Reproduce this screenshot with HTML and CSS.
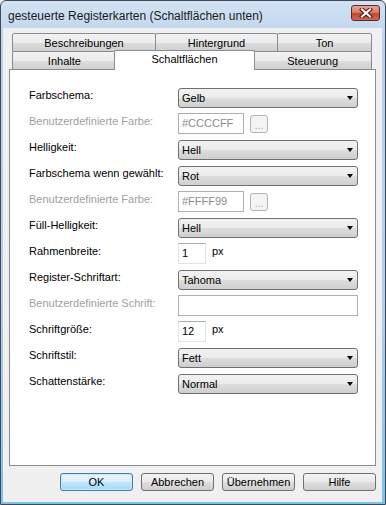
FILE: index.html
```html
<!DOCTYPE html>
<html lang="de">
<head>
    <meta charset="UTF-8">
    <meta name="viewport" content="width=device-width, initial-scale=1.0">
    <title>gesteuerte Registerkarten</title>
    <link rel="stylesheet" href="styles.css">
</head>
<body>
    <div class="window">
        <div class="titlebar">
            <span class="title">gesteuerte Registerkarten (Schaltflächen unten)</span>
            <div class="close">
                <svg width="14" height="10" viewBox="0 0 14 10">
                    <path d="M3 1.5 L11 8.5 M11 1.5 L3 8.5" stroke="#4a1a14" stroke-width="4.2" stroke-linecap="square"/>
                    <path d="M3 1.5 L11 8.5 M11 1.5 L3 8.5" stroke="#fff" stroke-width="2.2" stroke-linecap="square"/>
                </svg>
            </div>
        </div>
        <div class="client">
            <div class="tabs">
                <div class="tab_row">
                    <div class="tab t_beschreibungen">Beschreibungen</div>
                    <div class="tab t_hintergrund">Hintergrund</div>
                    <div class="tab t_ton">Ton</div>
                </div>
                <div class="tab_row">
                    <div class="tab t_inhalte">Inhalte</div>
                    <div class="tab t_schalt active">Schaltflächen</div>
                    <div class="tab t_steuerung">Steuerung</div>
                </div>
            </div>
            <div class="panel">
                <div class="row">
                    <span class="lbl">Farbschema:</span>
                    <div class="combo">Gelb<span class="arrow"></span></div>
                </div>
                <div class="row">
                    <span class="lbl disabled">Benutzerdefinierte Farbe:</span>
                    <div class="edit color disabled">#CCCCFF</div>
                    <div class="dots">...</div>
                </div>
                <div class="row">
                    <span class="lbl">Helligkeit:</span>
                    <div class="combo">Hell<span class="arrow"></span></div>
                </div>
                <div class="row">
                    <span class="lbl">Farbschema wenn gewählt:</span>
                    <div class="combo">Rot<span class="arrow"></span></div>
                </div>
                <div class="row">
                    <span class="lbl disabled">Benutzerdefinierte Farbe:</span>
                    <div class="edit color disabled">#FFFF99</div>
                    <div class="dots">...</div>
                </div>
                <div class="row">
                    <span class="lbl">Füll-Helligkeit:</span>
                    <div class="combo">Hell<span class="arrow"></span></div>
                </div>
                <div class="row">
                    <span class="lbl">Rahmenbreite:</span>
                    <div class="edit small">1</div>
                    <span class="unit">px</span>
                </div>
                <div class="row">
                    <span class="lbl">Register-Schriftart:</span>
                    <div class="combo">Tahoma<span class="arrow"></span></div>
                </div>
                <div class="row">
                    <span class="lbl disabled">Benutzerdefinierte Schrift:</span>
                    <div class="edit wide disabled"></div>
                </div>
                <div class="row">
                    <span class="lbl">Schriftgröße:</span>
                    <div class="edit small">12</div>
                    <span class="unit">px</span>
                </div>
                <div class="row">
                    <span class="lbl">Schriftstil:</span>
                    <div class="combo">Fett<span class="arrow"></span></div>
                </div>
                <div class="row">
                    <span class="lbl">Schattenstärke:</span>
                    <div class="combo">Normal<span class="arrow"></span></div>
                </div>
            </div>
            <div class="footer">
                <div class="btn default">OK</div>
                <div class="btn">Abbrechen</div>
                <div class="btn">Übernehmen</div>
                <div class="btn">Hilfe</div>
            </div>
        </div>
    </div>
</body>
</html>
```

FILE: styles.css
```css
body{
    margin: 0;
    font-family: "Liberation Sans", Arial, sans-serif;
    font-size: 11px;
    color: #000;
}
.window{
    width: 386px;
    height: 505px;
    box-sizing: border-box;
    border: 1px solid #3b4a5c;
    border-radius: 6px 6px 0 0;
    padding: 0 3px 2px 2px;
    background: linear-gradient(#d2e2f3, #bcd2ea 8%, #b4cde8 60%, #7fc1ea);
    display: flex;
    flex-direction: column;
}

/* title bar */
.titlebar{
    height: 27px;
    display: flex;
    align-items: flex-start;
}
.titlebar .title{
    flex: 1;
    padding: 8px 0 0 5px;
    font-size: 12px;
    color: #1b1b1b;
}
.close{
    width: 29px;
    height: 16px;
    box-sizing: border-box;
    margin: 4px 2px 0 0;
    border: 1px solid #5e2a24;
    border-radius: 3px;
    background: linear-gradient(#e8a99b, #d97a66 45%, #c4452f 55%, #d2684f);
    display: flex;
    align-items: center;
    justify-content: center;
}

/* client area */
.client{
    flex: 1;
    background: #f0f0f0;
    padding: 5px 6px 0 6px;
}
.tabs{
    margin-left: 3px;
    width: 360px;
}
.tab_row{
    display: flex;
    align-items: flex-start;
}
.tab_row + .tab_row{
    margin-top: -1px;
}
.tab{
    height: 19px;
    box-sizing: border-box;
    border: 1px solid #898c95;
    border-radius: 2px 2px 0 0;
    background: linear-gradient(#f2f2f2, #ebebeb 50%, #dddddd 51%, #cfcfcf);
    text-align: center;
    line-height: 18px;
}
.tab + .tab{
    margin-left: -1px;
}
.t_beschreibungen{ width: 144px; }
.t_hintergrund{ width: 123px; }
.t_ton{ width: 95px; }
.t_inhalte{ width: 105px; }
.t_steuerung{ width: 119px; }
.tab.active{
    position: relative;
    z-index: 1;
    width: 142px;
    height: 20px;
    margin: -1px -2px -2px -3px;
    background: #fff;
    border-bottom: none;
    line-height: 16px;
}
.tab.active + .tab{
    margin-left: 0;
}

/* panel */
.panel{
    height: 397px;
    box-sizing: border-box;
    margin-top: -1px;
    border: 1px solid #898c95;
    background: #fff;
    padding: 15px 0 0 19px;
}
.row{
    display: flex;
    align-items: flex-start;
    height: 26px;
}
.lbl{
    width: 149px;
    line-height: 20px;
    white-space: nowrap;
}
.lbl.disabled{
    color: #a0a0a0;
}
.combo{
    width: 180px;
    height: 20px;
    box-sizing: border-box;
    margin-top: 3px;
    padding-left: 3px;
    border: 1px solid #707070;
    border-radius: 3px;
    background: linear-gradient(#f2f2f2, #ebebeb 50%, #dddddd 51%, #cfcfcf);
    line-height: 18px;
    display: flex;
    align-items: center;
    justify-content: space-between;
}
.arrow{
    width: 0;
    height: 0;
    margin-right: 4px;
    border-left: 3.5px solid transparent;
    border-right: 3.5px solid transparent;
    border-top: 4px solid #000;
}
.edit{
    height: 21px;
    box-sizing: border-box;
    margin-top: 2px;
    padding-left: 3px;
    border: 1px solid #e2e3ea;
    border-top-color: #abadb3;
    background: #fff;
    line-height: 19px;
}
.edit.disabled{
    border-color: #afafaf;
    color: #8a8a8a;
}
.edit.color{
    width: 66px;
}
.edit.small{
    width: 28px;
}
.edit.wide{
    width: 180px;
}
.dots{
    width: 18px;
    height: 18px;
    box-sizing: border-box;
    margin: 4px 0 0 6px;
    border: 1px solid #b2b2b2;
    border-radius: 3px;
    background: #f4f4f4;
    color: #a0a0a0;
    text-align: center;
    line-height: 20px;
    font-size: 10px;
}
.unit{
    margin-left: 6px;
    line-height: 20px;
}

/* buttons */
.footer{
    display: flex;
    justify-content: flex-end;
    gap: 8px;
    margin-top: 7px;
}
.btn{
    width: 73px;
    height: 18px;
    box-sizing: border-box;
    border: 1px solid #707070;
    border-radius: 3px;
    background: linear-gradient(#f2f2f2, #ebebeb 50%, #dddddd 51%, #cfcfcf);
    text-align: center;
    line-height: 16px;
}
.btn.default{
    border-color: #3c7fb1;
    background: linear-gradient(#eaf6fd, #d9f0fc 50%, #bee6fd 51%, #a7d9f5);
    box-shadow: inset 0 0 0 1px #c8e8f9;
}
```
